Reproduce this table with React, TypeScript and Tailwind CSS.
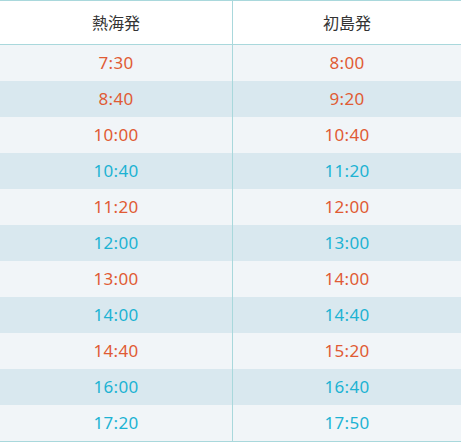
import React from "react";

type Dep = { time: string; hot: boolean };

const rows: [Dep, Dep][] = [
  [{ time: "7:30", hot: true }, { time: "8:00", hot: true }],
  [{ time: "8:40", hot: true }, { time: "9:20", hot: true }],
  [{ time: "10:00", hot: true }, { time: "10:40", hot: true }],
  [{ time: "10:40", hot: false }, { time: "11:20", hot: false }],
  [{ time: "11:20", hot: true }, { time: "12:00", hot: true }],
  [{ time: "12:00", hot: false }, { time: "13:00", hot: false }],
  [{ time: "13:00", hot: true }, { time: "14:00", hot: true }],
  [{ time: "14:00", hot: false }, { time: "14:40", hot: false }],
  [{ time: "14:40", hot: true }, { time: "15:20", hot: true }],
  [{ time: "16:00", hot: false }, { time: "16:40", hot: false }],
  [{ time: "17:20", hot: false }, { time: "17:50", hot: false }],
];

const Cell: React.FC<{ dep: Dep; left?: boolean }> = ({ dep, left }) => (
  <div
    className={`flex items-center justify-center text-[17px] tracking-[0.3px] ${
      left ? "w-[233px] border-r border-[#a9d8dc]" : "flex-1"
    } ${dep.hot ? "text-[#e05b34]" : "text-[#1db3d3]"}`}
  >
    {dep.time}
  </div>
);

export default function App() {
  return (
    <div
      className="w-[461px] bg-white"
      style={{ fontFamily: '"Noto Sans", "Noto Sans CJK JP", sans-serif' }}
    >
      <div className="flex h-[45px] border-y border-[#a9d8dc] text-[16px] text-[#333333]">
        <div className="flex w-[233px] items-center justify-center border-r border-[#a9d8dc]">
          熱海発
        </div>
        <div className="flex flex-1 items-center justify-center">初島発</div>
      </div>
      <div className="border-b border-[#a9d8dc]">
        {rows.map(([a, b], i) => (
          <div
            key={i}
            className={`flex h-9 ${i % 2 === 0 ? "bg-[#f1f5f8]" : "bg-[#d9e8ef]"}`}
          >
            <Cell dep={a} left />
            <Cell dep={b} />
          </div>
        ))}
      </div>
    </div>
  );
}
